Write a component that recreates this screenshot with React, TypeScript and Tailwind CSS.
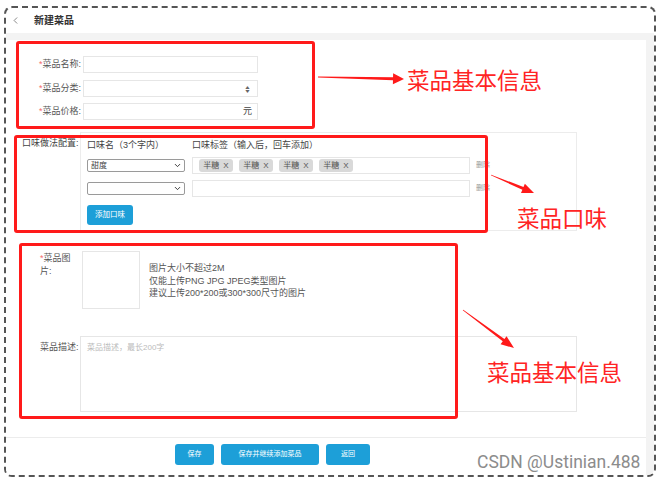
import {ChevronDown, ChevronLeft} from "lucide-react";

const font = {fontFamily: '"Liberation Sans", "Noto Sans CJK SC", sans-serif'};

// arrow polygon from start to tip, tapered shaft + filled head
const arrowPts = (x1: number, y1: number, x2: number, y2: number, head = 12, hw = 5) => {
    const dx = x2 - x1, dy = y2 - y1;
    const len = Math.hypot(dx, dy);
    const ux = dx / len, uy = dy / len;
    const px = -uy, py = ux;
    const bx = x2 - ux * head, by = y2 - uy * head;
    const pts = [
        [x1 + px * 0.4, y1 + py * 0.4],
        [bx + px * 1.4, by + py * 1.4],
        [bx + px * hw, by + py * hw],
        [x2, y2],
        [bx - px * hw, by - py * hw],
        [bx - px * 1.4, by - py * 1.4],
        [x1 - px * 0.4, y1 - py * 0.4],
    ];
    return pts.map(p => p.join(",")).join(" ");
};

const Req = ({text}: {text: string}) => (
    <><span className="text-[#f56c6c]">*</span><span>{text}</span></>
);

const Select = ({value}: {value?: string}) => (
    <div className="w-[98px] h-[13px] border border-[#9a9a9a] rounded-[2px] flex items-center justify-between pl-[3px] pr-[2px] text-[8px] text-[#444]">
        <span>{value}</span>
        <ChevronDown size={9} strokeWidth={2.5} className="text-[#333]"/>
    </div>
);

const Tag = () => (
    <div className="h-[13px] w-[34px] rounded-[3px] bg-[#d9d9d9] flex items-center justify-center gap-[4px] text-[8px] text-[#555]">
        <span>半糖</span><span>X</span>
    </div>
);

const BlueBtn = ({text, w}: {text: string; w: string}) => (
    <button className={`${w} h-[21px] rounded-[3px] bg-[#1d9fd8] text-white text-[7px] flex items-center justify-center`}>
        {text}
    </button>
);

const App = () => {
    return (
        <div className="w-[659px] h-[481px] bg-white relative overflow-hidden" style={font}>
            {/* dashed frame */}
            <div className="ml-[4px] mt-[6px] w-[652px] h-[471px] border-2 border-dashed border-[#555] rounded-[8px] flex flex-col overflow-hidden">
                {/* header */}
                <div className="h-[25px] flex items-center pl-[4px] shrink-0">
                    <ChevronLeft size={11} strokeWidth={1.5} className="text-[#555]"/>
                    <span className="ml-[13px] text-[10px] font-bold text-[#333]">新建菜品</span>
                </div>

                <div className="flex-1 bg-[#f3f3f3] pt-[7px] pr-[8px] flex flex-col min-h-0">
                    <div className="flex-1 bg-white flex flex-col text-[9px] text-[#555]">
                        <div className="h-[398px] border-b border-[#ececec] pt-[16px] flex flex-col">
                            {/* basic info */}
                            <div className="flex items-center">
                                <div className="w-[76px] text-right pr-[1px]"><Req text="菜品名称:"/></div>
                                <div className="ml-[1px] w-[175px] h-[17px] border border-[#e6e6e6]"/>
                            </div>
                            <div className="flex items-center mt-[7px]">
                                <div className="w-[76px] text-right pr-[1px]"><Req text="菜品分类:"/></div>
                                <div className="ml-[1px] w-[175px] h-[17px] border border-[#e6e6e6] flex items-center justify-end pr-[6px] text-[7px] text-[#666] leading-none">
                                    <span className="flex flex-col items-center scale-y-75">
                                        <span className="leading-[5px]">▲</span>
                                        <span className="leading-[5px]">▼</span>
                                    </span>
                                </div>
                            </div>
                            <div className="flex items-center mt-[6px]">
                                <div className="w-[76px] text-right pr-[1px]"><Req text="菜品价格:"/></div>
                                <div className="ml-[1px] w-[175px] h-[17px] border border-[#e6e6e6] flex items-center justify-end pr-[5px] text-[#444]">元</div>
                            </div>

                            {/* flavour config */}
                            <div className="flex mt-[12px]">
                                <div className="w-[74px] pl-[16px] pt-[5px] text-[#444]">口味做法配置:</div>
                                <div className="w-[497px] h-[99px] border border-[#ececec] pl-[6px] pt-[7px] flex flex-col">
                                    <div className="h-[12px] flex items-center text-[#444]">
                                        <span className="w-[105px]">口味名（3个字内）</span>
                                        <span>口味标签（输入后，回车添加）</span>
                                    </div>
                                    <div className="mt-[5px] flex items-center">
                                        <Select value="甜度"/>
                                        <div className="ml-[7px] w-[278px] h-[17px] border border-[#e6e6e6] flex items-center pl-[6px] gap-[6px]">
                                            <Tag/><Tag/><Tag/><Tag/>
                                        </div>
                                        <span className="ml-[6px] text-[7px] text-[#999]">删除</span>
                                    </div>
                                    <div className="mt-[6px] flex items-center">
                                        <Select/>
                                        <div className="ml-[7px] w-[278px] h-[17px] border border-[#e6e6e6]"/>
                                        <span className="ml-[6px] text-[7px] text-[#999]">删除</span>
                                    </div>
                                    <button className="mt-[8px] w-[46px] h-[20px] rounded-[3px] bg-[#1d9fd8] text-white text-[7.5px] flex items-center justify-center">
                                        添加口味
                                    </button>
                                </div>
                            </div>

                            {/* picture */}
                            <div className="flex mt-[20px]">
                                <div className="w-[76px] pl-[34px] pr-[6px] pt-[1px] leading-[13px]">
                                    <div><Req text="菜品图"/></div>
                                    <div>片:</div>
                                </div>
                                <div className="w-[58px] h-[58px] border border-[#e6e6e6]"/>
                                <div className="ml-[9px] pt-[11px] leading-[12.5px] text-[#555]">
                                    <div>图片大小不超过2M</div>
                                    <div>仅能上传PNG JPG JPEG类型图片</div>
                                    <div>建议上传200*200或300*300尺寸的图片</div>
                                </div>
                            </div>

                            {/* description */}
                            <div className="flex mt-[27px]">
                                <div className="w-[74px] pl-[34px] pt-[5px]">菜品描述:</div>
                                <div className="w-[497px] h-[76px] border border-[#e6e6e6] pl-[6px] pt-[5px] text-[8px] text-[#bbb]">
                                    菜品描述，最长200字
                                </div>
                            </div>
                        </div>

                        {/* footer */}
                        <div className="flex pl-[169px] pt-[6px] gap-[7px]">
                            <BlueBtn text="保存" w="w-[39px]"/>
                            <BlueBtn text="保存并继续添加菜品" w="w-[98px]"/>
                            <BlueBtn text="返回" w="w-[44px]"/>
                        </div>
                    </div>
                </div>
            </div>

            {/* annotation boxes */}
            <div className="absolute left-[16px] top-[41px] w-[299px] h-[88px] border-[3px] border-[#ff1a1a] rounded-[3px]"/>
            <div className="absolute left-[14px] top-[135px] w-[474px] h-[98px] border-[3px] border-[#ff1a1a] rounded-[3px]"/>
            <div className="absolute left-[19px] top-[243px] w-[439px] h-[176px] border-[3px] border-[#ff1a1a] rounded-[3px]"/>

            <svg className="absolute left-0 top-0" width={659} height={481}>
                <polygon points={arrowPts(318, 77, 404, 79, 11, 5.5)} fill="#ff1a1a"/>
                <polygon points={arrowPts(491, 175, 534, 193, 12, 5)} fill="#ff1a1a"/>
                <polygon points={arrowPts(463, 310, 514, 348, 13, 5)} fill="#ff1a1a"/>
            </svg>

            <div className="absolute left-[407px] top-[64px] text-[22.5px] leading-[30px] text-[#ff2424]"
                 style={{fontFamily: '"Noto Sans CJK SC", sans-serif'}}>菜品基本信息</div>
            <div className="absolute left-[517px] top-[202px] text-[22.5px] leading-[30px] text-[#ff2424]"
                 style={{fontFamily: '"Noto Sans CJK SC", sans-serif'}}>菜品口味</div>
            <div className="absolute left-[487px] top-[356px] text-[22.5px] leading-[30px] text-[#ff2424]"
                 style={{fontFamily: '"Noto Sans CJK SC", sans-serif'}}>菜品基本信息</div>

            {/* watermark */}
            <div className="absolute left-[477px] top-[450px] text-[17.5px] leading-[24px] text-[#8c8c8c] [text-shadow:0_0_2px_#fff]"
                 style={{fontFamily: 'Roboto, "Liberation Sans", sans-serif'}}>CSDN @Ustinian.488</div>
        </div>
    );
};

export default App;
